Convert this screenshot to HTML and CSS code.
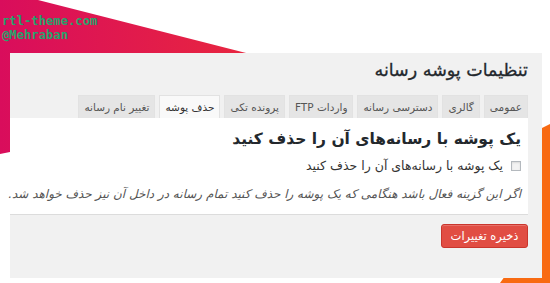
FILE: index.html
```html
<!DOCTYPE html>
<html lang="fa">
<head>
<meta charset="utf-8">
<link rel="stylesheet" href="styles.css">
</head>
<body>
<div class="stage">
  <svg class="art" width="550" height="283" viewBox="0 0 550 283">
    <defs>
      <linearGradient id="pink" x1="0" y1="0" x2="1" y2="0">
        <stop offset="0" stop-color="#d90d5c"/>
        <stop offset="1" stop-color="#e8263f"/>
      </linearGradient>
    </defs>
    <polygon points="0,0 38,0 250,54 10,54 10,152 0,154" fill="url(#pink)"/>
    <polygon points="542,128 550,124 550,283 500,283 505,276 542,276" fill="#f86a12"/>
  </svg>
  <div class="mark">rtl-theme.com<br>@Mehraban</div>
  <div class="panel">
    <h1 class="title">تنظیمات پوشه رسانه</h1>
    <div class="tabs">
      <span class="tab">عمومی</span>
      <span class="tab">گالری</span>
      <span class="tab">دسترسی رسانه</span>
      <span class="tab">واردات FTP</span>
      <span class="tab">پرونده تکی</span>
      <span class="tab active">حذف پوشه</span>
      <span class="tab">تغییر نام رسانه</span>
    </div>
    <div class="box">
      <h2 class="heading">یک پوشه با رسانه‌های آن را حذف کنید</h2>
      <label class="check"><span class="cb"></span>یک پوشه با رسانه‌های آن را حذف کنید</label>
      <p class="desc">اگر این گزینه فعال باشد هنگامی که یک پوشه را حذف کنید تمام رسانه در داخل آن نیز حذف خواهد شد.</p>
    </div>
    <div class="actions"><button class="btn">ذخیره تغییرات</button></div>
  </div>
</div>
</body>
</html>
```

FILE: styles.css
```css
html, body { margin: 0; padding: 0; background: #fff; }
.stage {
  position: relative;
  width: 550px;
  height: 283px;
  overflow: hidden;
  font-family: "DejaVu Sans", sans-serif;
}
.art { position: absolute; left: 0; top: 0; }
.mark {
  position: absolute;
  left: 2px;
  top: 14px;
  font-family: "DejaVu Sans Mono", monospace;
  font-weight: bold;
  font-size: 12.2px;
  line-height: 14px;
  color: #27a36c;
}
.panel {
  position: relative;
  margin: 53px 0 0 10px;
  width: 518px;
  height: 225px;
  padding-right: 14px;
  background: #f1f1f1;
  direction: rtl;
  display: flex;
  flex-direction: column;
}
.title {
  margin: 0;
  padding: 3px 0 0 0;
  font-size: 17.5px;
  line-height: 28px;
  font-weight: normal;
  color: #23282d;
  height: 39px;
  -webkit-text-stroke: 0.3px #23282d;
}
.tabs {
  display: flex;
  gap: 4px;
  height: 23px;
}
.tab {
  box-sizing: border-box;
  height: 23px;
  padding: 0 5px;
  background: #e5e5e5;
  border: 1px solid #e2e2e2;
  border-bottom: none;
  color: #555;
  font-size: 10.5px;
  line-height: 22px;
  white-space: nowrap;
}
.tab.active { background: #f9f9f9; color: #333; }
.box {
  background: #fff;
  border-bottom: 1px solid #dcdcdc;
  height: 96px;
  padding: 0 7px 0 0;
}
.heading {
  margin: 0;
  padding-top: 10px;
  font-size: 15.5px;
  line-height: 22px;
  font-weight: bold;
  color: #23282d;
}
.check {
  display: flex;
  align-items: center;
  gap: 8px;
  margin-top: 7px;
  font-size: 12.5px;
  line-height: 18px;
  color: #333;
}
.cb {
  width: 8px;
  height: 8px;
  border: 1px solid #b4b9be;
  background: #f3f3f3;
  box-shadow: inset 0 1px 2px rgba(0,0,0,0.1);
}
.desc {
  margin: 11px 0 0;
  font-size: 12px;
  line-height: 16px;
  font-style: italic;
  color: #555;
  white-space: nowrap;
}
.actions { padding-top: 9px; }
.btn {
  box-sizing: border-box;
  width: 87px;
  height: 24px;
  background: #e14d43;
  border: 1px solid #c9362d;
  border-radius: 3px;
  color: #fff;
  font-family: "DejaVu Sans", sans-serif;
  font-size: 11.5px;
  padding: 0;
  box-shadow: inset 0 1px 0 rgba(255,255,255,0.2);
}
```
